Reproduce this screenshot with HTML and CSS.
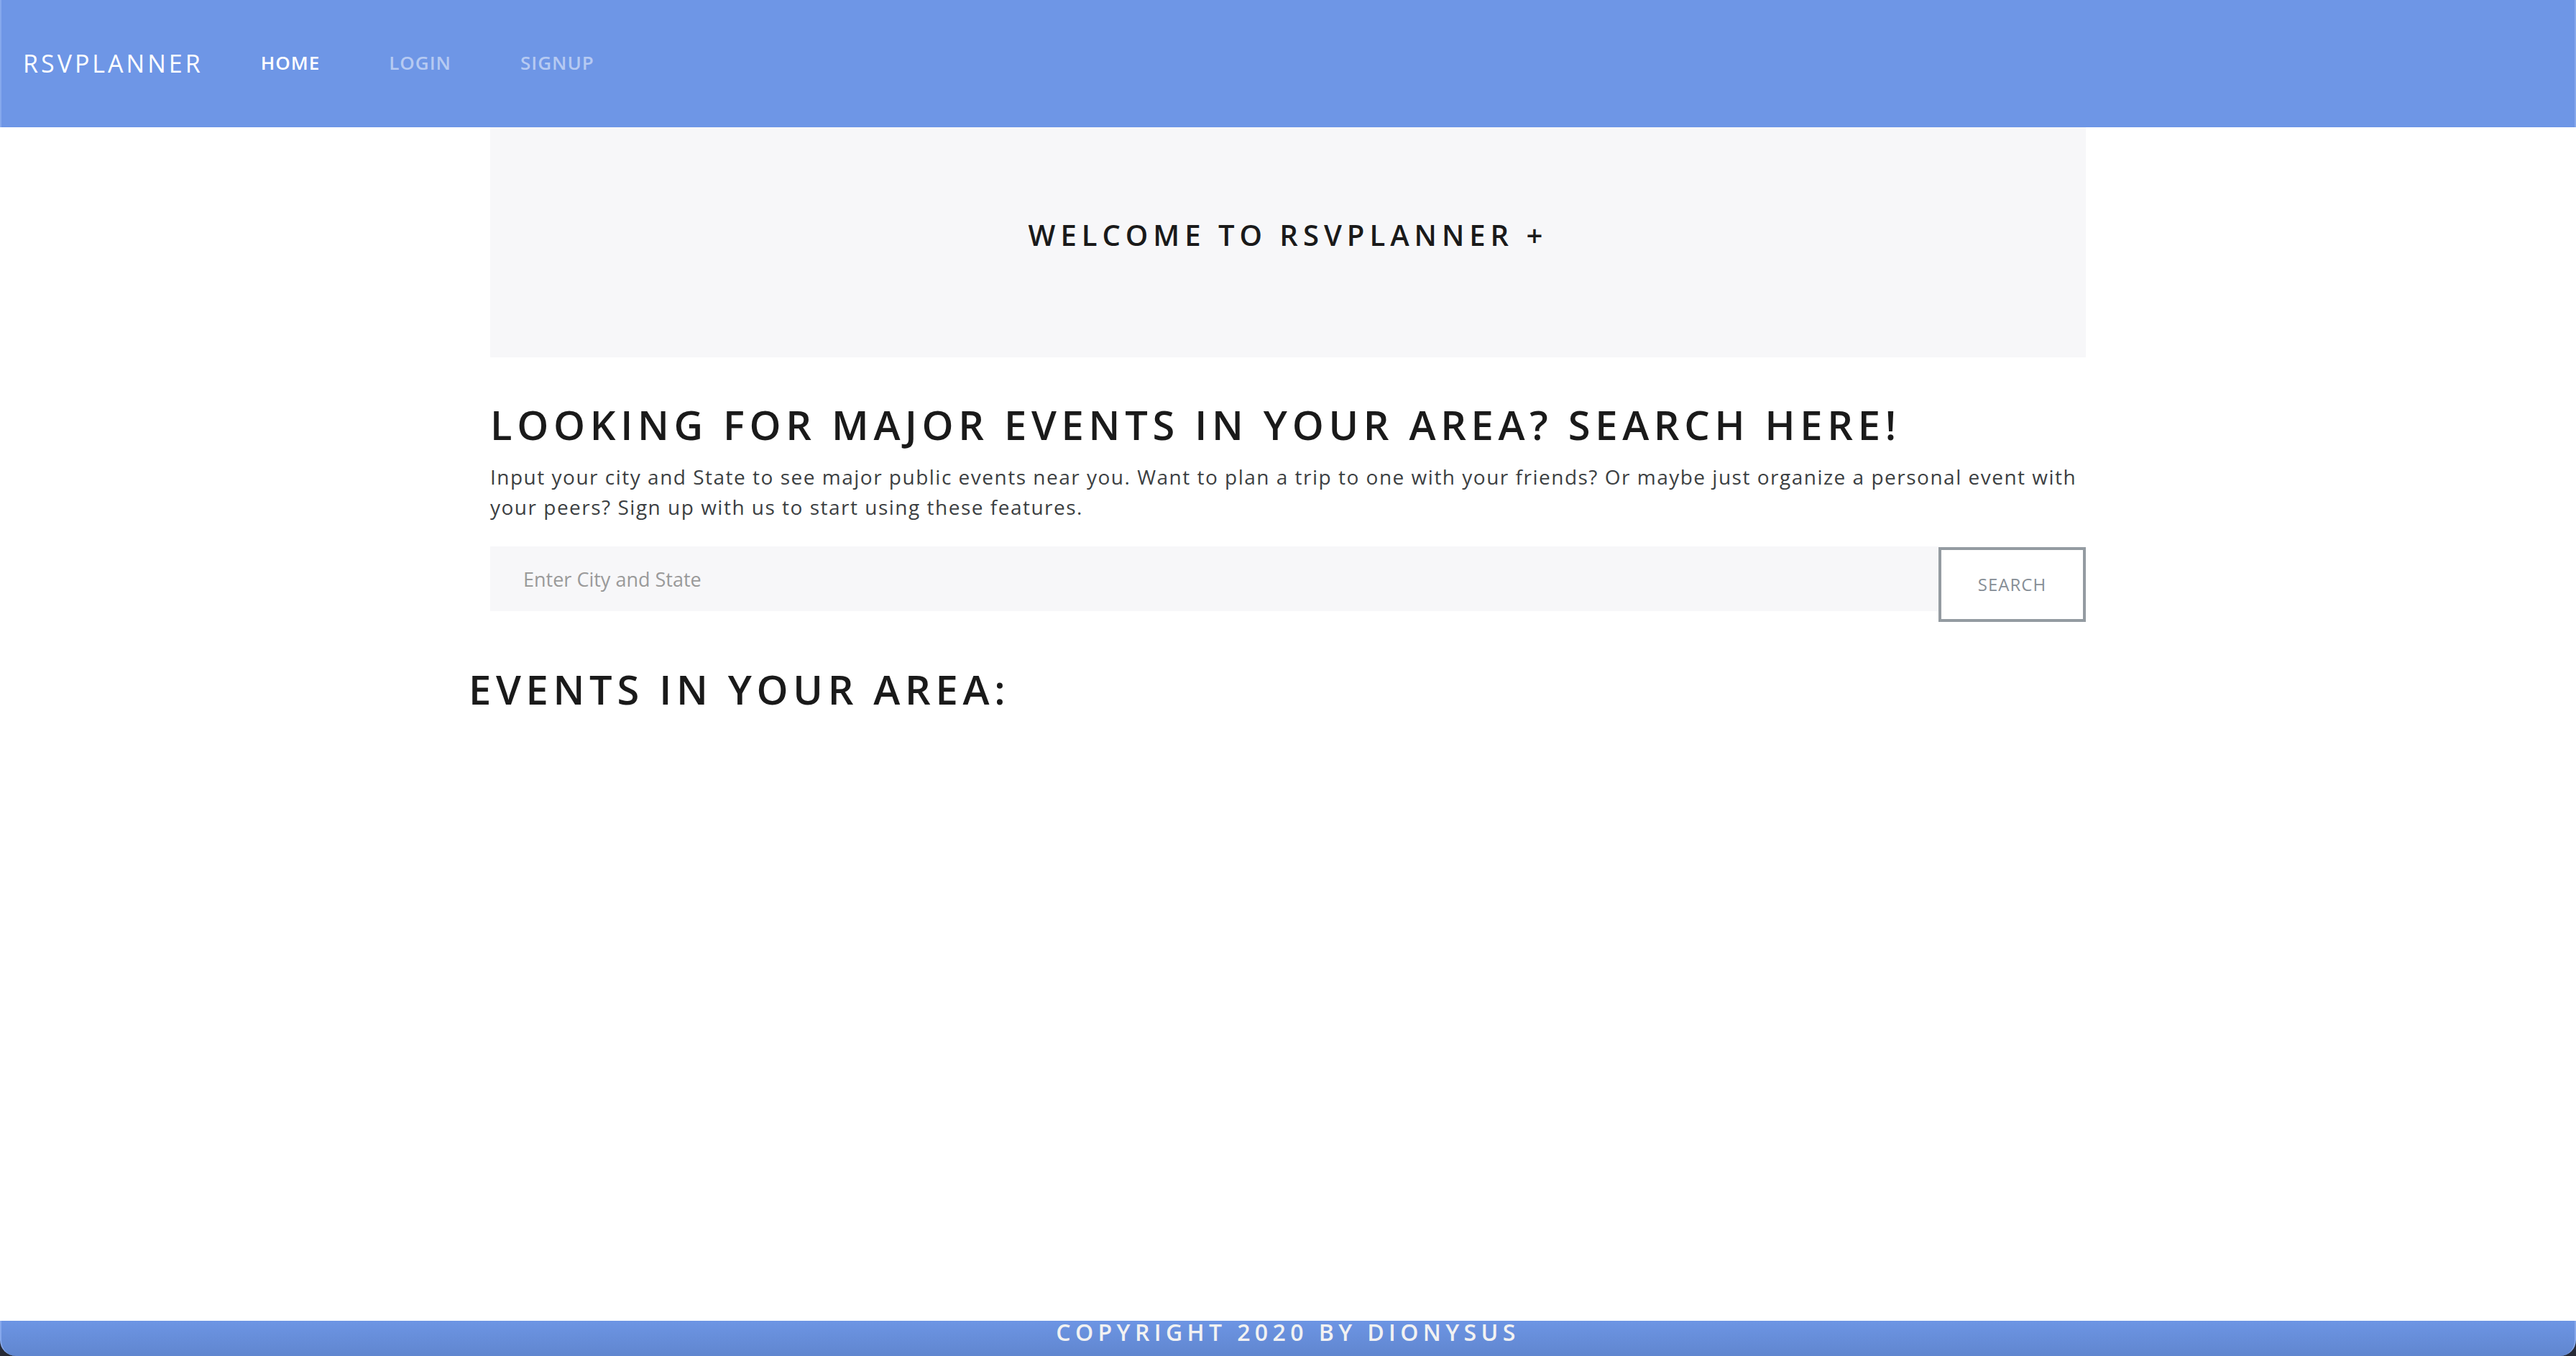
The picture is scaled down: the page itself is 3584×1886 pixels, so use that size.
FILE: index.html
```html
<!DOCTYPE html>
<html lang="en">
<head>
<meta charset="utf-8">
<title>RSVPlanner</title>
<link rel="stylesheet" href="styles.css">
</head>
<body>
<nav class="navbar">
  <a class="brand" href="#">RSVPLANNER</a>
  <ul class="nav">
    <li><a class="nav-link active" href="#">Home</a></li>
    <li><a class="nav-link" href="#">Login</a></li>
    <li><a class="nav-link" href="#">Signup</a></li>
  </ul>
</nav>
<main class="container">
  <section class="jumbotron">
    <h4 class="welcome">Welcome to RSVPlanner +</h4>
  </section>
  <h2 class="title">Looking for major events in your area? Search here!</h2>
  <p class="lead">Input your city and State to see major public events near you. Want to plan a trip to one with your friends? Or maybe just organize a personal event with your peers? Sign up with us to start using these features.</p>
  <form class="search">
    <input class="search-input" type="text" placeholder="Enter City and State">
    <button class="search-btn" type="button">Search</button>
  </form>
  <h2 class="events-title">Events in your area:</h2>
</main>
<div class="footer-wrap">
  <footer class="footer">Copyright 2020 by Dionysus</footer>
</div>
</body>
</html>
```
FILE: styles.css
```css
* { box-sizing: border-box; }
html, body { margin: 0; padding: 0; }
body {
  font-family: "Open Sans", "Noto Sans", sans-serif;
  background: #ffffff;
  color: #55595c;
  height: 1886px;
  display: flex;
  flex-direction: column;
}
.navbar {
  height: 177px;
  background: #6e96e6;
  border-left: 2px solid #86a8ec;
  border-right: 2px solid #86a8ec;
  display: flex;
  align-items: center;
  padding-left: 30px;
}
.brand {
  color: #ffffff;
  text-decoration: none;
  font-size: 34px;
  letter-spacing: 4px;
  font-weight: 400;
  margin-right: 80px;
  margin-top: -2px;
}
.nav {
  list-style: none;
  margin: -3px 0 0;
  padding: 0;
  display: flex;
  gap: 96px;
}
.nav-link {
  color: rgba(255,255,255,0.5);
  text-decoration: none;
  text-transform: uppercase;
  font-size: 26px;
  letter-spacing: 1px;
  font-weight: 600;
}
.nav-link.active { color: #ffffff; }
.container {
  width: 2280px;
  margin: 0 auto;
  padding: 0 30px;
  flex: 1;
}
.jumbotron {
  background: #f7f7f9;
  padding: 126px 64px 130px;
  margin-bottom: 60px;
  text-align: center;
}
.welcome {
  margin: 0 0 16px;
  font-size: 40px;
  line-height: 48px;
  font-weight: 600;
  letter-spacing: 7px;
  text-transform: uppercase;
  color: #1a1a1a;
}
.title, .events-title {
  font-size: 56px;
  line-height: 67px;
  font-weight: 600;
  letter-spacing: 6.7px;
  text-transform: uppercase;
  color: #1a1a1a;
  margin: 0 0 18px;
}
.lead {
  margin: 0 0 34px;
  font-size: 28px;
  line-height: 42px;
  letter-spacing: 1.5px;
  color: #3c3f42;
}
.search {
  display: flex;
  align-items: flex-start;
}
.search-input {
  flex: 1;
  height: 90px;
  border: none;
  background: #f7f7f9;
  padding: 0 46px;
  font-family: inherit;
  font-size: 27px;
  color: #55595c;
  outline: none;
}
.search-input::placeholder { color: #9a9a9a; }
.search-btn {
  width: 205px;
  height: 104px;
  margin-top: 1px;
  padding-bottom: 3px;
  border: 4px solid #949ba1;
  background: #ffffff;
  color: #868e96;
  font-family: inherit;
  font-size: 24px;
  text-transform: uppercase;
  letter-spacing: 1px;
  font-weight: 400;
}
.events-title {
  margin: 60px 0 0 -30px;
}
.footer-wrap {
  background: #262a36;
}
.footer {
  height: 49px;
  background: linear-gradient(#6d95e4, #6086cf);
  border-radius: 0 0 22px 22px;
  text-align: center;
  color: #f2f2f2;
  font-size: 32px;
  line-height: 32px;
  font-weight: 600;
  letter-spacing: 6.4px;
  text-transform: uppercase;
  border-left: 2px solid #86a8ec;
  border-right: 2px solid #86a8ec;
}
```
